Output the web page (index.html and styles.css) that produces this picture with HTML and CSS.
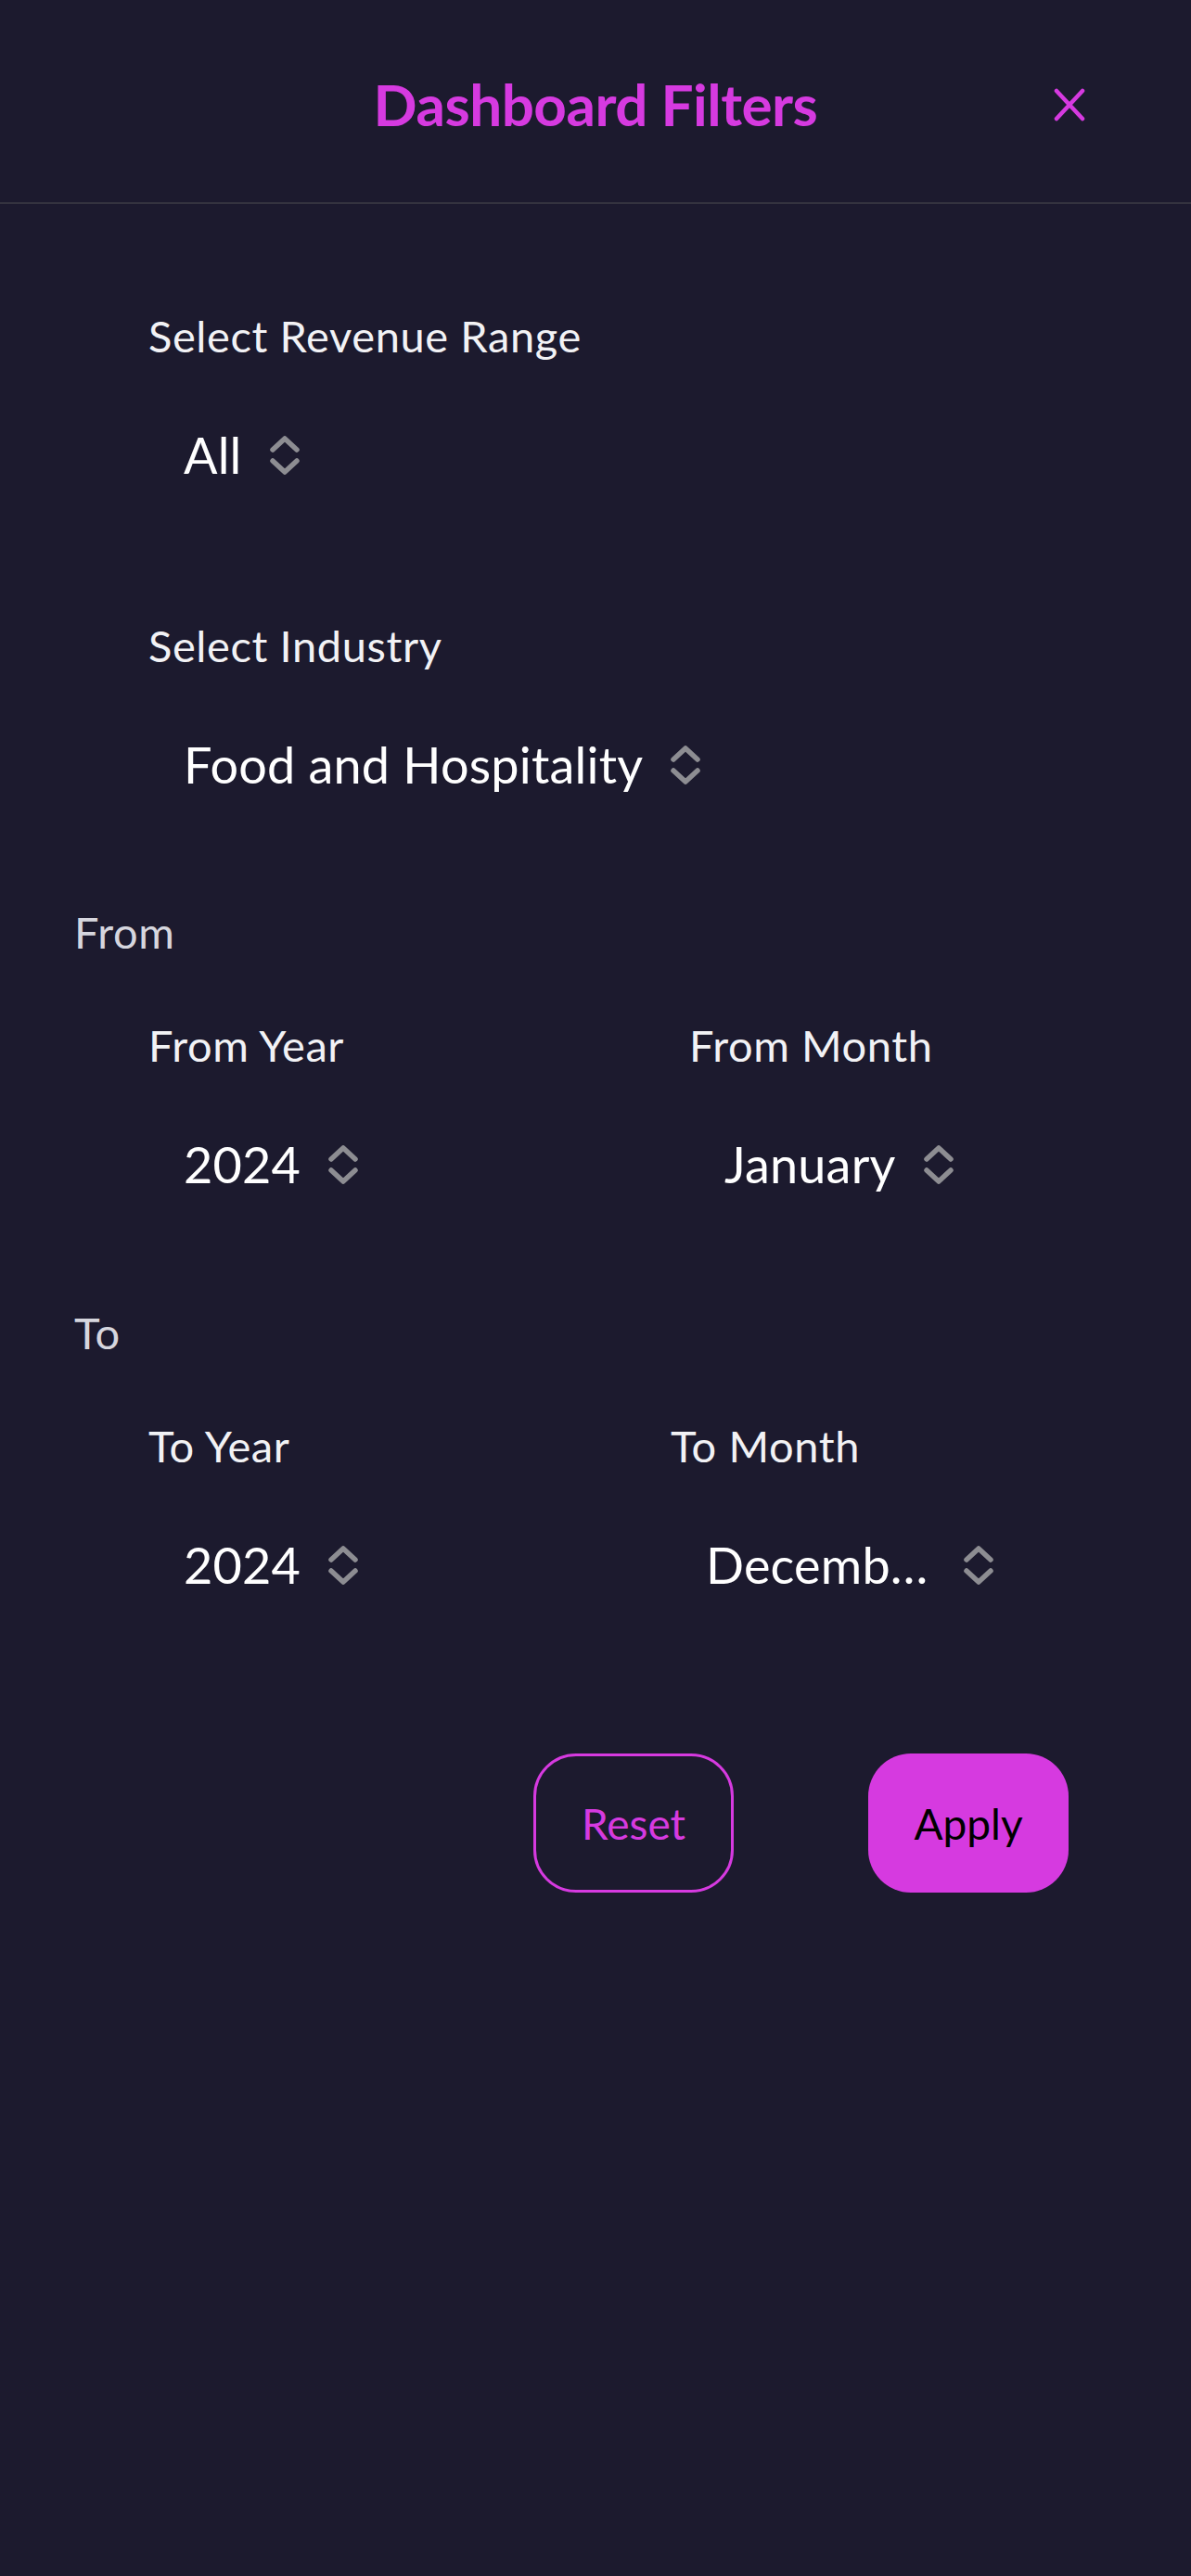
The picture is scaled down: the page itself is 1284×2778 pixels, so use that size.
FILE: index.html
```html
<!DOCTYPE html>
<html lang="en">
<head>
<meta charset="utf-8">
<title>Dashboard Filters</title>
<link rel="stylesheet" href="styles.css">
</head>
<body>
<div class="sheet">
  <header class="topbar">
    <div class="topbar-side"></div>
    <h1 class="title">Dashboard Filters</h1>
    <div class="topbar-side topbar-right">
      <button class="close" aria-label="Close">
        <svg width="34" height="36" viewBox="0 0 34 36"><path d="M3 3 L31 33 M31 3 L3 33" fill="none" stroke="#d63ae0" stroke-width="4.5" stroke-linecap="round"/></svg>
      </button>
    </div>
  </header>

  <main class="content">
    <div class="field field-first">
      <div class="label">Select Revenue Range</div>
      <div class="picker"><span class="value">All</span><svg class="chev" width="34" height="44" viewBox="0 0 34 44"><path d="M4 16 L17 4 L30 16 M4 28 L17 40 L30 28" fill="none" stroke="#8d8d92" stroke-width="5.5" stroke-linecap="round" stroke-linejoin="round"/></svg></div>
    </div>

    <div class="field field-second">
      <div class="label">Select Industry</div>
      <div class="picker"><span class="value">Food and Hospitality</span><svg class="chev" width="34" height="44" viewBox="0 0 34 44"><path d="M4 16 L17 4 L30 16 M4 28 L17 40 L30 28" fill="none" stroke="#8d8d92" stroke-width="5.5" stroke-linecap="round" stroke-linejoin="round"/></svg></div>
    </div>

    <section class="range range-from">
      <div class="section-title">From</div>
      <div class="pair pair-from">
        <div class="col">
          <div class="label">From Year</div>
          <div class="picker"><span class="value">2024</span><svg class="chev" width="34" height="44" viewBox="0 0 34 44"><path d="M4 16 L17 4 L30 16 M4 28 L17 40 L30 28" fill="none" stroke="#8d8d92" stroke-width="5.5" stroke-linecap="round" stroke-linejoin="round"/></svg></div>
        </div>
        <div class="col">
          <div class="label">From Month</div>
          <div class="picker"><span class="value">January</span><svg class="chev" width="34" height="44" viewBox="0 0 34 44"><path d="M4 16 L17 4 L30 16 M4 28 L17 40 L30 28" fill="none" stroke="#8d8d92" stroke-width="5.5" stroke-linecap="round" stroke-linejoin="round"/></svg></div>
        </div>
      </div>
    </section>

    <section class="range range-to">
      <div class="section-title">To</div>
      <div class="pair pair-to">
        <div class="col">
          <div class="label">To Year</div>
          <div class="picker"><span class="value">2024</span><svg class="chev" width="34" height="44" viewBox="0 0 34 44"><path d="M4 16 L17 4 L30 16 M4 28 L17 40 L30 28" fill="none" stroke="#8d8d92" stroke-width="5.5" stroke-linecap="round" stroke-linejoin="round"/></svg></div>
        </div>
        <div class="col">
          <div class="label">To Month</div>
          <div class="picker"><span class="value value-trunc">Decemb…</span><svg class="chev" width="34" height="44" viewBox="0 0 34 44"><path d="M4 16 L17 4 L30 16 M4 28 L17 40 L30 28" fill="none" stroke="#8d8d92" stroke-width="5.5" stroke-linecap="round" stroke-linejoin="round"/></svg></div>
        </div>
      </div>
    </section>

    <div class="actions">
      <button class="btn btn-reset">Reset</button>
      <button class="btn btn-apply">Apply</button>
    </div>
  </main>
</div>
</body>
</html>
```

FILE: styles.css
```css
html, body {
  margin: 0;
  padding: 0;
  background: #1c1a2e;
}

body {
  width: 1284px;
  min-height: 2778px;
  font-family: Lato, "Open Sans", sans-serif;
  color: #ffffff;
}

.sheet {
  min-height: 2778px;
  background: #1c1a2e;
}

.topbar {
  display: grid;
  grid-template-columns: 1fr auto 1fr;
  align-items: center;
  padding: 76px 0 70px;
  border-bottom: 2px solid #34333f;
}

.title {
  margin: 0;
  font-size: 62px;
  line-height: 72px;
  font-weight: 700;
  color: #d63ae0;
  letter-spacing: -0.5px;
}

.topbar-right {
  display: flex;
  justify-content: flex-end;
  padding-right: 114px;
}

.close {
  display: flex;
  background: none;
  border: 0;
  padding: 0;
  margin-top: 2px;
}

.content {
  display: flex;
  flex-direction: column;
  padding: 114px 0 0 80px;
}

.field {
  padding-left: 80px;
}

.field-second {
  margin-top: 145px;
}

.label {
  font-size: 47px;
  line-height: 56px;
  letter-spacing: 0.6px;
  color: #f2f2f5;
}

.picker {
  display: flex;
  align-items: center;
  gap: 29px;
  margin-top: 69px;
  padding-left: 38px;
}

.value {
  font-size: 54px;
  line-height: 64px;
  letter-spacing: 0.2px;
  color: #ffffff;
}

.value-trunc {
  min-width: 248px;
}

.chev {
  flex: none;
}

.range {
  display: flex;
  flex-direction: column;
}

.range-from {
  margin-top: 120px;
}

.range-to {
  margin-top: 121px;
}

.section-title {
  font-size: 47px;
  line-height: 56px;
  letter-spacing: 0.6px;
  color: #d6d6de;
}

.pair {
  display: grid;
  margin-top: 66px;
  padding-left: 80px;
}

.pair-from {
  grid-template-columns: 583px 1fr;
}

.pair-to {
  grid-template-columns: 563px 1fr;
}

.actions {
  display: flex;
  justify-content: flex-end;
  gap: 145px;
  margin-top: 171px;
  padding-right: 132px;
}

.btn {
  box-sizing: border-box;
  width: 216px;
  height: 150px;
  border-radius: 46px;
  font-family: Lato, "Open Sans", sans-serif;
  font-size: 46px;
  padding: 0;
  cursor: pointer;
}

.btn-reset {
  background: transparent;
  border: 3px solid #d63ae0;
  color: #d63ae0;
}

.btn-apply {
  background: #d63ae0;
  border: 0;
  color: #000000;
}
```
